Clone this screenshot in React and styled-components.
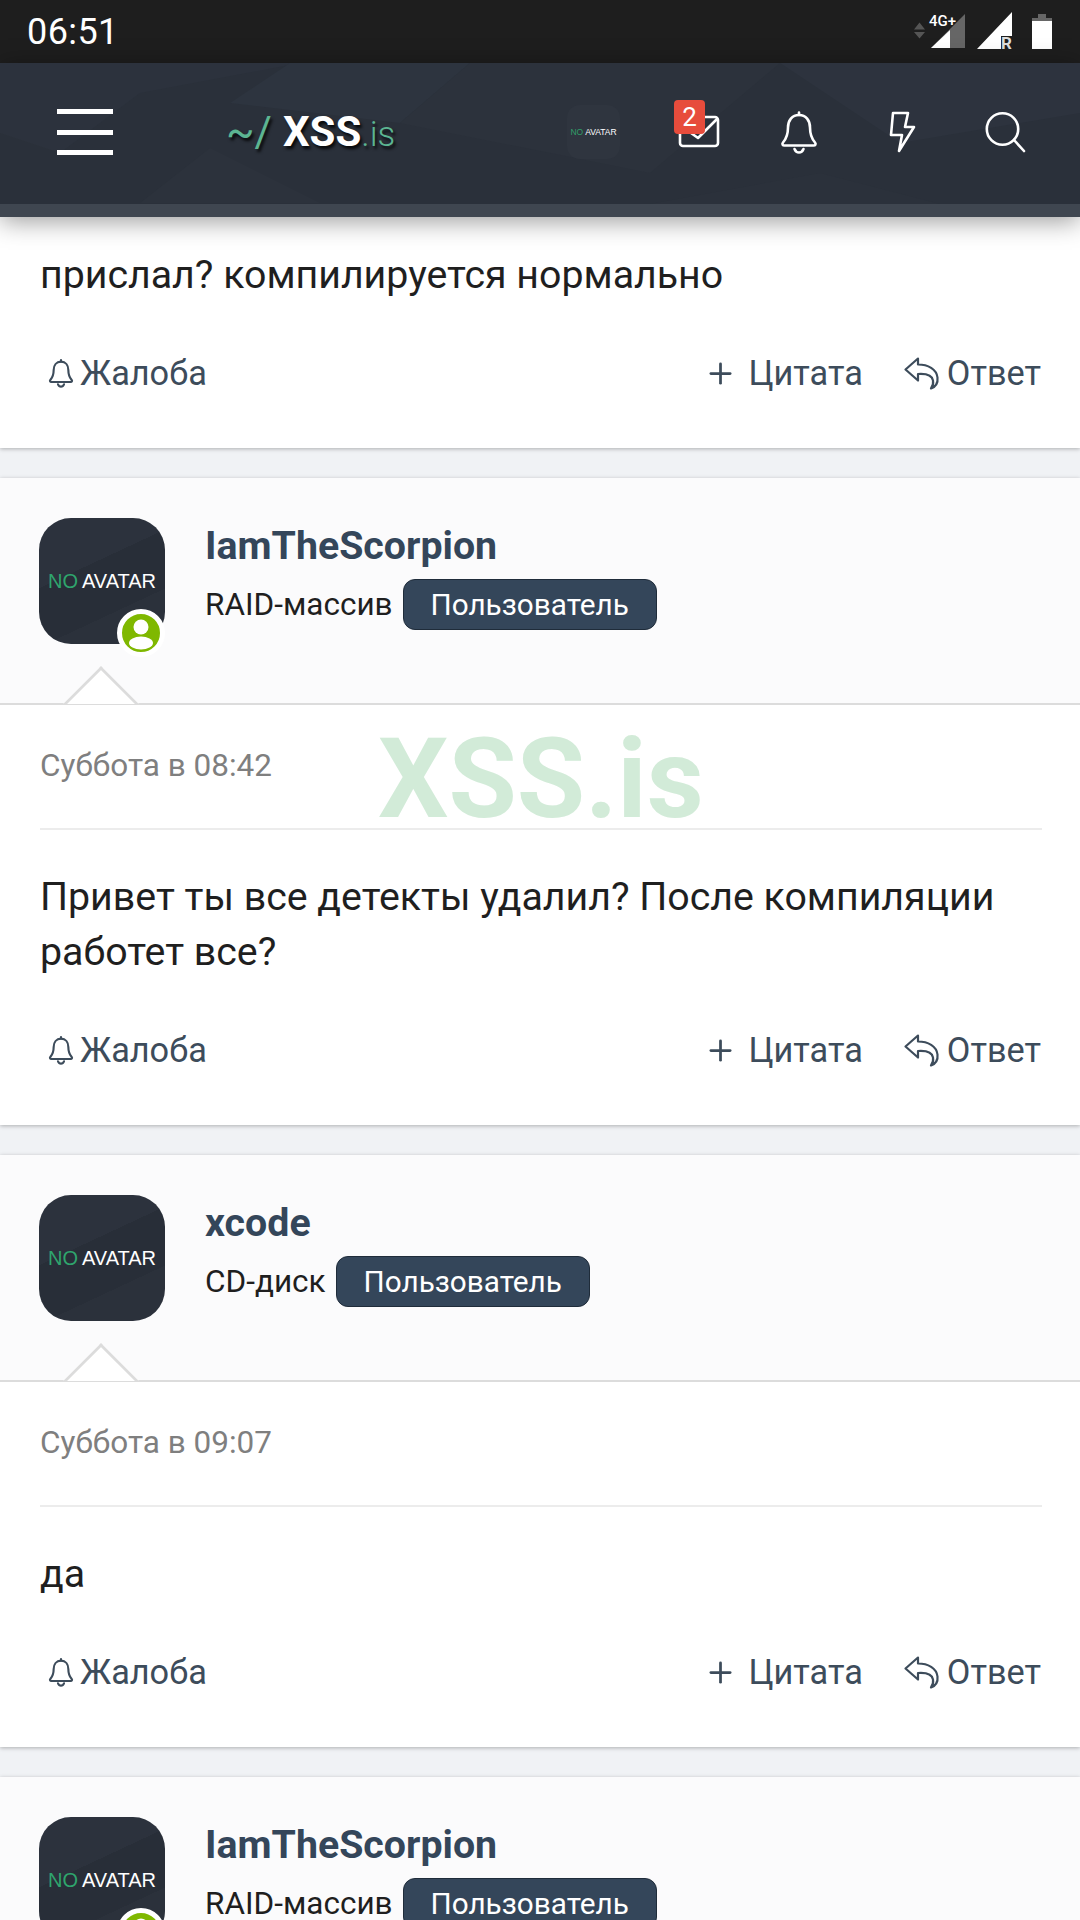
import React from "react";
import styled, { createGlobalStyle } from "styled-components";
import { Plus } from "lucide-react";

const Global = createGlobalStyle`
  html, body {
    margin: 0;
    padding: 0;
    background: #f0f2f5;
  }
  body {
    font-family: Roboto, "Liberation Sans", sans-serif;
    -webkit-font-smoothing: antialiased;
  }
  * {
    box-sizing: border-box;
  }
`;

const posts = [
  {
    id: 1,
    user: "IamTheScorpion",
    rank: "RAID-массив",
    online: true,
    date: "Суббота в 08:42",
    lines: ["Привет ты все детекты удалил? После компиляции", "работет все?"],
    watermark: true,
  },
  {
    id: 2,
    user: "xcode",
    rank: "CD-диск",
    date: "Суббота в 09:07",
    lines: ["да"],
  },
  {
    id: 3,
    user: "IamTheScorpion",
    rank: "RAID-массив",
    online: true,
    date: "Суббота в 09:15",
    lines: [],
  },
];

const Phone = styled.div`
  position: relative;
  width: 1080px;
  height: 1920px;
  overflow: hidden;
  background: #f0f2f5;
`;

const StatusBar = styled.div`
  height: 63px;
  background: #1e1e1e;
  display: flex;
  align-items: center;
  justify-content: space-between;
  padding: 0 26px 0 27px;
  color: #fff;
`;

const Clock = styled.span`
  font-size: 36px;
  line-height: 1;
  letter-spacing: 0.4px;
`;

const Header = styled.header`
  position: relative;
  height: 154px;
  background: #2a303a;
  border-bottom: 13px solid #3f4650;
  box-shadow: 0 4px 24px rgba(0, 0, 0, 0.4);
  z-index: 2;
  display: flex;
  align-items: center;
  padding: 0 51px 3px 57px;
`;

const Facets = styled.svg`
  position: absolute;
  inset: 0;
  width: 100%;
  height: 100%;
`;

const Burger = styled.div`
  position: relative;
  width: 56px;
  height: 46px;
  display: flex;
  flex-direction: column;
  justify-content: space-between;

  span {
    height: 5px;
    background: #fff;
  }
`;

const Logo = styled.div`
  position: relative;
  margin-left: 113px;
  font-size: 42px;
  line-height: 1;
  color: #5cb592;
  text-shadow: 2px 3px 3px rgba(0, 0, 0, 0.8);
  white-space: nowrap;

  b {
    color: #fff;
    font-weight: 700;
    margin-left: 11px;
  }
`;

const LogoDomain = styled.span`
  font-size: 35px;
  font-weight: 300;
`;

const HeaderIcons = styled.div`
  position: relative;
  margin-left: auto;
  display: flex;
  align-items: center;
`;

const MiniAvatar = styled.div`
  width: 53px;
  height: 54px;
  border-radius: 13px;
  background: #2f353f;
  display: flex;
  align-items: center;
  justify-content: center;
  font-family: "Liberation Sans", sans-serif;
  font-size: 8.5px;
  color: #fff;
  white-space: nowrap;
  margin-right: 55px;

  em {
    font-style: normal;
    color: #2f9e68;
    margin-right: 2px;
  }
`;

const IconSlot = styled.div`
  position: relative;
  width: 48px;
  height: 48px;
  margin-left: ${(p) => p.$gap || 0}px;
  color: #fff;

  svg {
    display: block;
    width: 100%;
    height: 100%;
  }
`;

const Badge = styled.span`
  position: absolute;
  left: -1px;
  top: -8px;
  width: 31px;
  height: 34px;
  border-radius: 4px;
  background: #e74c3c;
  color: #fff;
  font-size: 26px;
  line-height: 34px;
  text-align: center;
`;

const PartialCard = styled.section`
  background: #fff;
  height: 231px;
  padding: 31px 38px 0 40px;
  box-shadow: 0 1px 4px rgba(0, 0, 0, 0.28);
`;

const Message = styled.div`
  font-size: 39.3px;
  line-height: 55px;
  color: #1f1f1f;
  white-space: nowrap;
`;

const Post = styled.article`
  position: relative;
  margin-top: 30px;
  background: #fff;
  box-shadow: 0 1px 4px rgba(0, 0, 0, 0.28);
`;

const PostHead = styled.div`
  position: relative;
  height: 227px;
  background: #fbfbfc;
  border-bottom: 2px solid #dcdcdc;
  padding: 40px 39px 0;
  display: flex;
  gap: 40px;
`;

const Pointer = styled.span`
  position: absolute;
  left: 74px;
  bottom: -28px;
  width: 54px;
  height: 54px;
  background: #fff;
  border-top: 3px solid #dcdcdc;
  border-left: 3px solid #dcdcdc;
  transform: rotate(45deg);
  clip-path: polygon(0 0, 100% 0, 0 100%);
`;

const Avatar = styled.div`
  position: relative;
  flex: none;
  width: 126px;
  height: 126px;
  border-radius: 32px;
  background: linear-gradient(155deg, #2c323d 0 38%, #282e38 38% 70%, #2b313b 70%);
  display: flex;
  align-items: center;
  justify-content: center;
  font-family: "Liberation Sans", sans-serif;
  font-size: 20px;
  color: #fff;
  white-space: nowrap;

  em {
    font-style: normal;
    color: #2fa56d;
    margin-right: 4px;
  }
`;

const OnlineDot = styled.span`
  position: absolute;
  right: 0;
  bottom: -13px;
  width: 48px;
  height: 48px;
  border-radius: 50%;
  background: #7fb800;
  border: 5px solid #fff;
  overflow: hidden;

  svg {
    display: block;
    width: 100%;
    height: 100%;
  }
`;

const UserInfo = styled.div`
  display: flex;
  flex-direction: column;
`;

const UserName = styled.div`
  font-size: 39.3px;
  line-height: 44px;
  font-weight: 700;
  color: #34465a;
  margin-top: 6px;
`;

const RankRow = styled.div`
  display: flex;
  align-items: center;
  gap: 10px;
  margin-top: 11px;
  font-size: 31.5px;
  color: #1f1f1f;
`;

const UserTitle = styled.span`
  height: 51px;
  padding: 0 27px;
  border-radius: 12px;
  background: #34465a;
  border: 1px solid #1f2c3a;
  color: #fff;
  font-size: 29.7px;
  line-height: 49px;
`;

const PostBody = styled.div`
  padding: 0 38px 0 40px;
`;

const PostDate = styled.div`
  height: 125px;
  padding-top: 44px;
  border-bottom: 2px solid #ececec;
  font-size: 31.5px;
  line-height: 34px;
  color: #7f7f7f;
`;

const PostText = styled(Message)`
  padding-top: 40px;
`;

const Watermark = styled.div`
  position: absolute;
  left: 378px;
  top: 246px;
  font-size: 111px;
  line-height: 1;
  font-weight: 700;
  color: #d2ebd8;
`;

const Actions = styled.div`
  display: flex;
  align-items: center;
  height: 50px;
  margin-top: ${(p) => p.$top}px;
  padding: 0 1px ${(p) => p.$bottom || 0}px 5px;
  font-size: 34.3px;
  color: #3d4c5b;
  box-sizing: content-box;
`;

const Action = styled.span`
  display: flex;
  align-items: center;
  gap: ${(p) => p.$gap}px;
  margin-left: ${(p) => p.$left || 0}px;

  svg {
    flex: none;
    display: block;
  }
`;

const Spacer = styled.span`
  flex: 1;
`;

const FacetShapes = () => (
  <Facets viewBox="0 0 1080 141" preserveAspectRatio="none">
    <polygon points="0,0 300,0 140,30 60,90 0,70" fill="#2c323d" />
    <polygon points="290,0 470,0 400,60 230,40" fill="#2d343f" />
    <polygon points="470,0 780,0 650,110 400,60" fill="#2c323c" />
    <polygon points="780,0 1080,0 1080,50 900,80" fill="#2d333e" />
    <polygon points="140,140 210,85 320,140" fill="#2c323c" />
    <polygon points="650,141 820,110 940,141" fill="#2b313b" />
  </Facets>
);

const BellIcon = ({ size = 48, stroke = 2.600 }) => (
  <svg width={size} height={size} viewBox="0 0 48 48" fill="none" stroke="currentColor" strokeWidth={stroke} strokeLinecap="round" strokeLinejoin="round">
    <path d="M24 7c-7 0-11 5.500-11 12.500 0 6-1.500 11-5 15-1.200 1.500-.4 3 1.500 3h29c1.900 0 2.700-1.500 1.500-3-3.500-4-5-9-5-15C35 12.500 31 7 24 7z" />
    <path d="M24 4.500V7M19.500 41c1 2.500 2.800 3.500 4.500 3.500s3.500-1 4.500-3.500" />
  </svg>
);

const ReplyIcon = () => (
  <svg width="37" height="36" viewBox="0 0 36 36" fill="none" stroke="currentColor" strokeWidth="2.200" strokeLinejoin="round" strokeLinecap="round">
    <path d="M14.500 3.500 2 14.500l12.500 11V19c7.500-.5 14 .5 15 6.500.5 3-.5 6-2 8 5-2 7-6.500 6.500-11-1-8.500-9.500-13-19.500-13z" />
  </svg>
);

const PostActions = ({ top, bottom }) => (
  <Actions $top={top} $bottom={bottom}>
    <Action $gap={3}>
      <BellIcon size={32} stroke={3.200} />
      Жалоба
    </Action>
    <Spacer />
    <Action $gap={11}>
      <Plus size={33} strokeWidth={2} />
      Цитата
    </Action>
    <Action $gap={7} $left={40}>
      <ReplyIcon />
      Ответ
    </Action>
  </Actions>
);

const App = () => (
  <Phone>
    <Global />
    <StatusBar>
      <Clock>06:51</Clock>
      <svg width="140" height="63" viewBox="0 0 140 63">
        <path d="M0 29.500l5.500-7 5.500 7zM0 32h11l-5.500 6.500z" fill="#555" />
        <path d="M51 14V48H17z" fill="#666" />
        <path d="M17 48L36 30V48z" fill="#fff" />
        <text x="15" y="26" fill="#fff" fontFamily="Roboto" fontSize="15" fontWeight="500">4G+</text>
        <path d="M63 49L98 12V36H87V49z" fill="#fff" />
        <text x="87" y="49" fill="#ddd" fontFamily="Roboto" fontSize="17" fontWeight="700">R</text>
        <path d="M118 18h6v-4h8v4h6v31h-20z" fill="#fff" />
        <path d="M118 18h6v-4h8v4h6v3h-20z" fill="#666" />
      </svg>
    </StatusBar>

    <Header>
      <FacetShapes />
      <Burger>
        <span />
        <span />
        <span />
      </Burger>
      <Logo>
        ~/<b>XSS</b>
        <LogoDomain>.is</LogoDomain>
      </Logo>
      <HeaderIcons>
        <MiniAvatar>
          <em>NO</em>AVATAR
        </MiniAvatar>
        <IconSlot>
          <svg viewBox="0 0 48 48" fill="none" stroke="currentColor" strokeWidth="2.600" strokeLinejoin="round" strokeLinecap="round">
            <rect x="5" y="9" width="38" height="29" rx="3" />
            <path d="M9 20l14 10 19-19" />
          </svg>
          <Badge>2</Badge>
        </IconSlot>
        <IconSlot $gap={52}>
          <BellIcon />
        </IconSlot>
        <IconSlot $gap={55}>
          <svg viewBox="0 0 48 48" fill="none" stroke="currentColor" strokeWidth="2.600" strokeLinejoin="round" strokeLinecap="round">
            <path d="M15 5H30L27 19H36L21 43L24 27H13z" />
          </svg>
        </IconSlot>
        <IconSlot $gap={55}>
          <svg viewBox="0 0 48 48" fill="none" stroke="currentColor" strokeWidth="2.600" strokeLinecap="round">
            <circle cx="21.500" cy="21" r="15.700" />
            <path d="M33 32l10 11" />
          </svg>
        </IconSlot>
      </HeaderIcons>
    </Header>

    <PartialCard>
      <Message>прислал? компилируется нормально</Message>
      <PostActions top={45} />
    </PartialCard>

    {posts.map((post) => (
      <Post key={post.id}>
        <PostHead>
          <Avatar>
            <em>NO</em>AVATAR
            {post.online && (
              <OnlineDot>
                <svg viewBox="0 0 38 38" fill="#fff">
                  <circle cx="19" cy="13" r="7.500" />
                  <ellipse cx="19" cy="29" rx="12" ry="6.500" />
                </svg>
              </OnlineDot>
            )}
          </Avatar>
          <UserInfo>
            <UserName>{post.user}</UserName>
            <RankRow>
              {post.rank}
              <UserTitle>Пользователь</UserTitle>
            </RankRow>
          </UserInfo>
          <Pointer />
        </PostHead>
        {post.watermark && <Watermark>XSS.is</Watermark>}
        <PostBody>
          <PostDate>{post.date}</PostDate>
          <PostText>
            {post.lines.map((line) => (
              <div key={line}>{line}</div>
            ))}
          </PostText>
          <PostActions top={45} bottom={50} />
        </PostBody>
      </Post>
    ))}
  </Phone>
);

export default App;
